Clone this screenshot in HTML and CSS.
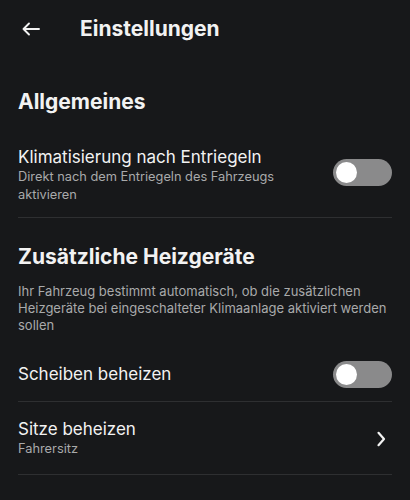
FILE: index.html
```html
<!DOCTYPE html>
<html lang="de">
<head>
<meta charset="utf-8">
<link rel="stylesheet" href="styles.css">
</head>
<body>
<header class="topbar">
  <svg class="back" width="20" height="16" viewBox="0 0 20 16"><path d="M18 8H2.5M8 2.5L2.5 8L8 13.5" fill="none" stroke="#f2f2f2" stroke-width="1.9" stroke-linecap="round" stroke-linejoin="round"/></svg>
  <h1 class="title">Einstellungen</h1>
</header>
<main class="content">
  <h2 class="section first">Allgemeines</h2>
  <div class="row row-a">
    <div class="text">
      <div class="label">Klimatisierung nach Entriegeln</div>
      <div class="sub">Direkt nach dem Entriegeln des Fahrzeugs<br>aktivieren</div>
    </div>
    <div class="toggle"><span class="knob"></span></div>
  </div>
  <h2 class="section second">Zusätzliche Heizgeräte</h2>
  <p class="desc">Ihr Fahrzeug bestimmt automatisch, ob die zusätzlichen Heizgeräte bei eingeschalteter Klimaanlage aktiviert werden sollen</p>
  <div class="row row-b">
    <div class="text"><div class="label">Scheiben beheizen</div></div>
    <div class="toggle"><span class="knob"></span></div>
  </div>
  <div class="row row-c">
    <div class="text">
      <div class="label">Sitze beheizen</div>
      <div class="sub">Fahrersitz</div>
    </div>
    <svg class="chev" width="10" height="16" viewBox="0 0 10 16"><path d="M2.5 1.8L8 8l-5.5 6.2" fill="none" stroke="#f2f2f2" stroke-width="2.2" stroke-linecap="round" stroke-linejoin="round"/></svg>
  </div>
</main>
</body>
</html>
```
FILE: styles.css
```css
html, body {
  margin: 0;
  background: #17181a;
  color: #f2f2f2;
  font-family: Inter, "Noto Sans", sans-serif;
  height: 100%;
}
.topbar {
  display: flex;
  align-items: center;
  padding: 17px 0 0 21px;
  height: 24px;
}
.back { display: block; }
.title {
  margin: 0 0 0 39px;
  font-size: 21px;
  line-height: 24px;
  font-weight: 700;
}
.content {
  padding: 0 18px;
}
.section {
  margin: 0;
  font-size: 21px;
  line-height: 26px;
  font-weight: 700;
}
.section.first { margin-top: 48px; }
.section.second { margin-top: 26px; }
.row {
  display: flex;
  align-items: center;
  justify-content: space-between;
  border-bottom: 1px solid #2e2f31;
}
.row-a { padding: 32px 0 13px; }
.row-b { padding: 27px 0 13px; }
.row-c { padding: 17px 0 16px; }
.label {
  font-size: 17px;
  line-height: 21px;
}
.sub {
  font-size: 12.8px;
  line-height: 18px;
  color: #a9aaab;
}
.desc {
  margin: 13px 0 0;
  font-size: 13px;
  line-height: 17px;
  color: #a9aaab;
}
.toggle {
  width: 59px;
  height: 27px;
  border-radius: 14px;
  background: #8a8a8b;
  display: flex;
  align-items: center;
  padding-left: 3px;
  box-sizing: border-box;
  margin-top: -6px;
}
.row-b .toggle { margin-top: 0; }
.knob {
  width: 21px;
  height: 21px;
  border-radius: 50%;
  background: #ffffff;
}
.chev { margin-right: 6px; }
```
